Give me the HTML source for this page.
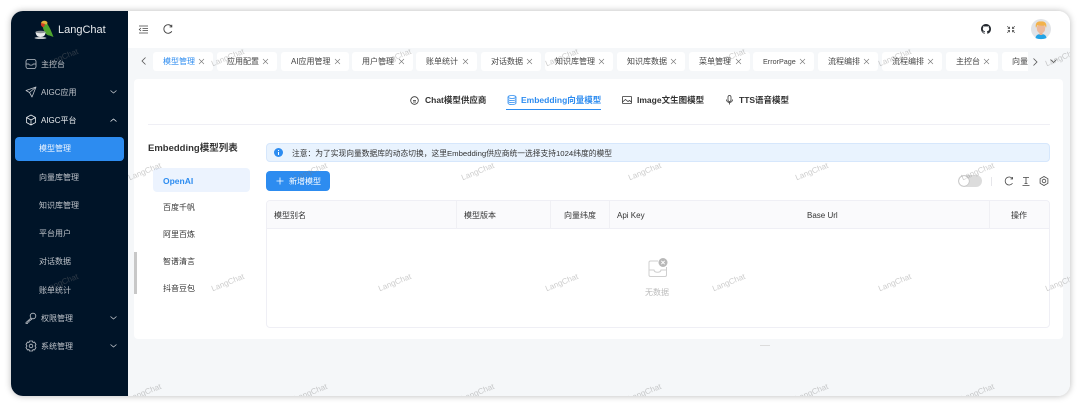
<!DOCTYPE html>
<html lang="zh"><head><meta charset="utf-8"><title>LangChat</title>
<style>
*{box-sizing:border-box;margin:0;padding:0}
html,body{width:1080px;height:407px;overflow:hidden;background:#fff;font-family:"Liberation Sans","Noto Sans CJK SC",sans-serif;font-size:8px;color:#444}
.a{position:absolute}
.t{position:absolute;white-space:nowrap;line-height:12px;height:12px}
#app{position:absolute;left:11px;top:11px;width:1059px;height:385px;border-radius:12px;box-shadow:0 0 7px rgba(0,0,0,.28);}
#clip{position:absolute;left:11px;top:11px;width:1059px;height:385px;border-radius:12px;overflow:hidden;background:#f5f7f9}
#stage{position:absolute;left:-11px;top:-11px;width:1080px;height:407px}
.side{color:#c0c5cb}
.tab{position:absolute;top:52px;height:19px;background:#fff;border-radius:3px;color:#444;line-height:20px;padding-left:10px;white-space:nowrap}
.tab svg{position:absolute;top:7px;right:9px}
.wm{position:absolute;width:60px;text-align:center;font-size:8px;line-height:10px;color:rgba(120,120,120,.38);transform:rotate(-22deg);white-space:nowrap}
.b{font-weight:700;color:#333}
.th{position:absolute;top:210px;line-height:12px;color:#333;white-space:nowrap}
.vl{position:absolute;top:201px;height:28px;width:1px;background:#f0f0f4}
svg{position:absolute;fill:none;overflow:visible}
</style></head><body>
<div id="app"></div>
<div id="clip"><div id="stage">

<!-- sidebar -->
<div class="a" style="left:11px;top:11px;width:117px;height:385px;background:#001428"></div>
<svg style="left:34px;top:19px" width="20" height="20" viewBox="0 0 20 20">
<path d="M8 5C9 3 13 3 14 6C16 9 18 14 19.500 18L15.500 16.500C12.500 16.500 9.500 13 8 5Z" fill="#4fa52e"/>
<path d="M7 4.500C7 1.500 12 .5 13.500 3.500L13 5.500L9 5Z" fill="#e3b13a"/>
<path d="M7 4C6.500 6.500 8 8.500 10 8L11 5Z" fill="#d13a25"/>
<path d="M1.500 13H11.500C11.500 16.500 9.500 18 6.500 18C3.500 18 2 16.500 1.500 13Z" fill="#e9ebec"/>
<ellipse cx="6.500" cy="19" rx="6" ry="1" fill="#c9cdd0"/>
<ellipse cx="6.500" cy="13" rx="5" ry="1.200" fill="#8d9499"/>
</svg>
<div class="t" style="left:58px;top:23px;height:14px;line-height:14px;font-size:11px;color:#e8ebee">LangChat</div>

<svg style="left:25px;top:58px" width="12" height="12" viewBox="0 0 12 12" stroke="#c0c5cb" stroke-width=".8"><rect x="1" y="1.500" width="10" height="9" rx="2"/><path d="M1 6H3.800C4 7.500 8 7.500 8.200 6H11"/></svg>
<div class="t side" style="left:41px;top:59px">主控台</div>
<svg style="left:25px;top:86px" width="12" height="12" viewBox="0 0 12 12" stroke="#c0c5cb" stroke-width=".8" stroke-linejoin="round"><path d="M11 1L1 4.500L4.500 6.500L7 11ZM4.500 6.500L11 1"/></svg>
<div class="t side" style="left:41px;top:87px">AIGC应用</div>
<svg style="left:110px;top:90px" width="7" height="4" viewBox="0 0 7 4" stroke="#c0c5cb" stroke-width=".8"><path d="M.5 .5L3.500 3L6.500 .5"/></svg>
<svg style="left:25px;top:114px" width="12" height="12" viewBox="0 0 12 12" stroke="#e8ebee" stroke-width=".8" stroke-linejoin="round"><path d="M6 1L10.500 3.500V8.500L6 11L1.500 8.500V3.500ZM1.500 3.500L6 6L10.500 3.500M6 6V11"/></svg>
<div class="t" style="left:41px;top:115px;color:#e8ebee">AIGC平台</div>
<svg style="left:110px;top:118px" width="7" height="4" viewBox="0 0 7 4" stroke="#e8ebee" stroke-width=".8"><path d="M.5 3.500L3.500 1L6.500 3.500"/></svg>

<div class="a" style="left:15px;top:137px;width:109px;height:24px;background:#2d8cf0;border-radius:4px"></div>
<div class="t" style="left:39px;top:143px;color:#f2f7fe">模型管理</div>
<div class="t side" style="left:39px;top:172px">向量库管理</div>
<div class="t side" style="left:39px;top:200px">知识库管理</div>
<div class="t side" style="left:39px;top:228px">平台用户</div>
<div class="t side" style="left:39px;top:256px">对话数据</div>
<div class="t side" style="left:39px;top:285px">账单统计</div>

<svg style="left:25px;top:312px" width="12" height="12" viewBox="0 0 12 12" stroke="#c0c5cb" stroke-width=".8"><circle cx="8" cy="4" r="2.800"/><path d="M6 6L1 10.500V11.500H2.500L3 10H4V9L5 8.500L7 7"/></svg>
<div class="t side" style="left:41px;top:313px">权限管理</div>
<svg style="left:110px;top:316px" width="7" height="4" viewBox="0 0 7 4" stroke="#c0c5cb" stroke-width=".8"><path d="M.5 .5L3.500 3L6.500 .5"/></svg>
<svg style="left:25px;top:340px" width="12" height="12" viewBox="0 0 12 12" stroke="#c0c5cb" stroke-width=".8" stroke-linejoin="round"><path d="M4.500 1H7.500L8 2.500L9.500 2L11 4.500L10 6L11 7.500L9.500 10L8 9.500L7.500 11H4.500L4 9.500L2.500 10L1 7.500L2 6L1 4.500L2.500 2L4 2.500Z"/><circle cx="6" cy="6" r="1.800"/></svg>
<div class="t side" style="left:41px;top:341px">系统管理</div>
<svg style="left:110px;top:344px" width="7" height="4" viewBox="0 0 7 4" stroke="#c0c5cb" stroke-width=".8"><path d="M.5 .5L3.500 3L6.500 .5"/></svg>

<!-- header -->
<div class="a" style="left:128px;top:11px;width:942px;height:37px;background:#fff"></div>
<svg style="left:139px;top:25px" width="9" height="9" viewBox="0 0 9 9" stroke="#444" stroke-width=".8"><path d="M0 1H9M3.500 3.500H9M3.500 5.500H9M0 8H9M2 3L.3 4.500L2 6"/></svg>
<svg style="left:163px;top:24px" width="10" height="10" viewBox="0 0 10 10" stroke="#444" stroke-width=".9"><path d="M8.800 2.700A4.300 4.300 0 1 0 8.800 7.300M8.800 .7V2.900H6.600"/></svg>
<svg style="left:981px;top:24px" width="10" height="10" viewBox="0 0 16 16"><path fill="#24292f" d="M8 0C3.580 0 0 3.580 0 8c0 3.540 2.290 6.530 5.470 7.590.4.070.55-.17.55-.38v-1.340c-2.230.48-2.700-1.070-2.700-1.070-.36-.93-.89-1.170-.89-1.170-.73-.5.050-.49.050-.49.800.06 1.230.83 1.230.83.710 1.220 1.870.870 2.330.660.070-.52.280-.87.510-1.070-1.780-.2-3.640-.89-3.640-3.950 0-.87.310-1.590.82-2.150-.08-.2-.36-1.020.08-2.120 0 0 .67-.21 2.200.82a7.660 7.660 0 0 1 4 0c1.530-1.040 2.200-.82 2.200-.82.44 1.100.16 1.920.08 2.120.51.560.82 1.270.82 2.150 0 3.070-1.870 3.750-3.650 3.950.29.250.54.730.54 1.480v2.200c0 .21.150.46.550.38A8.010 8.010 0 0 0 16 8c0-4.420-3.580-8-8-8z"/></svg>
<svg style="left:1007px;top:26px" width="8" height="7" viewBox="0 0 8 7" stroke="#444" stroke-width=".7"><path d="M.2 .2L2.400 2.300M.8 2.500H2.600V.8M7.800 .2L5.600 2.300M7.200 2.500H5.400V.8M.2 6.800L2.400 4.700M.8 4.500H2.600V6.200M7.800 6.800L5.600 4.700M7.200 4.500H5.400V6.200"/></svg>
<svg style="left:1031px;top:19px" width="20" height="20" viewBox="0 0 20 20">
<circle cx="10" cy="10" r="10" fill="#e1e3e7"/>
<path d="M4.500 19C5 16 7 15 10 15S15 16 15.500 19C12.500 20.500 7.500 20.500 4.500 19Z" fill="#23a3e6"/>
<rect x="8.500" y="12" width="3" height="4" fill="#e4b08f"/>
<ellipse cx="10" cy="9.500" rx="4.200" ry="5" fill="#ecb99c"/>
<path d="M5 9C3.500 3.500 7.500 1.800 10 2.500C13.500 1.800 16.500 4.500 15 9L14 6.500C11 7 8 6.500 6.500 6Z" fill="#f2b24c"/>
</svg>

<!-- tabs -->
<svg style="left:141px;top:57px" width="5" height="8" viewBox="0 0 5 8" stroke="#555" stroke-width=".8"><path d="M4.500 .5L1 4L4.500 7.500"/></svg>
<div class="tab" style="left:153px;width:60px;color:#2d8cf0">模型管理<svg width="5" height="5" viewBox="0 0 5 5" stroke="#777" stroke-width=".6"><path d="M0 0L5 5M5 0L0 5"/></svg></div>
<div class="tab" style="left:217px;width:60px">应用配置<svg width="5" height="5" viewBox="0 0 5 5" stroke="#777" stroke-width=".6"><path d="M0 0L5 5M5 0L0 5"/></svg></div>
<div class="tab" style="left:281px;width:68px">AI应用管理<svg width="5" height="5" viewBox="0 0 5 5" stroke="#777" stroke-width=".6"><path d="M0 0L5 5M5 0L0 5"/></svg></div>
<div class="tab" style="left:352px;width:61px">用户管理<svg width="5" height="5" viewBox="0 0 5 5" stroke="#777" stroke-width=".6"><path d="M0 0L5 5M5 0L0 5"/></svg></div>
<div class="tab" style="left:416px;width:61px">账单统计<svg width="5" height="5" viewBox="0 0 5 5" stroke="#777" stroke-width=".6"><path d="M0 0L5 5M5 0L0 5"/></svg></div>
<div class="tab" style="left:481px;width:60px">对话数据<svg width="5" height="5" viewBox="0 0 5 5" stroke="#777" stroke-width=".6"><path d="M0 0L5 5M5 0L0 5"/></svg></div>
<div class="tab" style="left:545px;width:68px">知识库管理<svg width="5" height="5" viewBox="0 0 5 5" stroke="#777" stroke-width=".6"><path d="M0 0L5 5M5 0L0 5"/></svg></div>
<div class="tab" style="left:617px;width:68px">知识库数据<svg width="5" height="5" viewBox="0 0 5 5" stroke="#777" stroke-width=".6"><path d="M0 0L5 5M5 0L0 5"/></svg></div>
<div class="tab" style="left:689px;width:61px">菜单管理<svg width="5" height="5" viewBox="0 0 5 5" stroke="#777" stroke-width=".6"><path d="M0 0L5 5M5 0L0 5"/></svg></div>
<div class="tab" style="left:753px;width:61px;font-size:7.200px">ErrorPage<svg width="5" height="5" viewBox="0 0 5 5" stroke="#777" stroke-width=".6"><path d="M0 0L5 5M5 0L0 5"/></svg></div>
<div class="tab" style="left:818px;width:60px">流程编排<svg width="5" height="5" viewBox="0 0 5 5" stroke="#777" stroke-width=".6"><path d="M0 0L5 5M5 0L0 5"/></svg></div>
<div class="tab" style="left:882px;width:60px">流程编排<svg width="5" height="5" viewBox="0 0 5 5" stroke="#777" stroke-width=".6"><path d="M0 0L5 5M5 0L0 5"/></svg></div>
<div class="tab" style="left:946px;width:52px">主控台<svg width="5" height="5" viewBox="0 0 5 5" stroke="#777" stroke-width=".6"><path d="M0 0L5 5M5 0L0 5"/></svg></div>
<div class="tab" style="left:1002px;width:26px;overflow:hidden;border-radius:3px 0 0 3px">向量</div>
<svg style="left:1033px;top:58px" width="5" height="8" viewBox="0 0 5 8" stroke="#555" stroke-width=".8"><path d="M.5 .5L4 4L.5 7.500"/></svg>
<svg style="left:1050px;top:59px" width="7" height="4" viewBox="0 0 7 4" stroke="#555" stroke-width=".8"><path d="M.5 .5L3.500 3.500L6.500 .5"/></svg>

<!-- card -->
<div class="a" style="left:134px;top:79px;width:929px;height:260px;background:#fff;border-radius:4px"></div>
<svg style="left:410px;top:96px" width="9" height="9" viewBox="0 0 9 9" stroke="#333" stroke-width=".8"><circle cx="4.500" cy="4.500" r="3.800"/><path d="M3 4.500H6M3 6H6"/></svg>
<div class="t b" style="left:425px;top:94px;font-size:8.500px">Chat模型供应商</div>
<svg style="left:507px;top:95px" width="10" height="10" viewBox="0 0 10 10" stroke="#2d8cf0" stroke-width=".8"><ellipse cx="5" cy="2" rx="4" ry="1.500"/><path d="M1 2V8C1 10 9 10 9 8V2M1 4C1 6 9 6 9 4M1 6C1 8 9 8 9 6"/></svg>
<div class="t" style="left:521px;top:94px;font-size:8.500px;font-weight:700;color:#2d8cf0">Embedding向量模型</div>
<div class="a" style="left:506px;top:108.500px;width:95px;height:1px;background:#2d8cf0"></div>
<svg style="left:622px;top:96px" width="10" height="8" viewBox="0 0 10 8" stroke="#333" stroke-width=".8"><rect x=".5" y=".5" width="9" height="7" rx=".5"/><path d="M.5 6L3.500 3.500L6 5.500L7.500 4.500L9.500 6"/></svg>
<div class="t b" style="left:637px;top:94px;font-size:8.500px">Image文生图模型</div>
<svg style="left:726px;top:95px" width="7" height="10" viewBox="0 0 7 10" stroke="#333" stroke-width=".8"><rect x="2" y=".5" width="3" height="6" rx="1.500"/><path d="M.5 4.500C.5 8.500 6.500 8.500 6.500 4.500M3.500 7.500V9.500"/></svg>
<div class="t b" style="left:739px;top:94px;font-size:8.500px">TTS语音模型</div>
<div class="a" style="left:148px;top:124px;width:902px;height:1px;background:#efeff5"></div>

<!-- left list -->
<div class="t b" style="left:148px;top:142.500px;font-size:9.500px">Embedding模型列表</div>
<div class="a" style="left:153px;top:168px;width:97px;height:24px;background:#ecf3fe;border-radius:4px"></div>
<div class="t" style="left:163px;top:174.500px;font-weight:700;font-size:8.500px;color:#2d8cf0">OpenAI</div>
<div class="t" style="left:163px;top:202px;color:#333">百度千帆</div>
<div class="t" style="left:163px;top:229px;color:#333">阿里百炼</div>
<div class="t" style="left:163px;top:256px;color:#333">智谱清言</div>
<div class="t" style="left:163px;top:283px;color:#333">抖音豆包</div>
<div class="a" style="left:134px;top:252px;width:3px;height:42px;background:#c8c8c8"></div>

<!-- alert -->
<div class="a" style="left:266px;top:143px;width:784px;height:19px;background:#e9f3fe;border:1px solid #d6e7fc;border-radius:4px"></div>
<svg style="left:274px;top:148px" width="9" height="9" viewBox="0 0 9 9"><circle cx="4.500" cy="4.500" r="4.500" fill="#2d8cf0"/><path d="M4.500 4V7M4.500 2V3" stroke="#fff" stroke-width="1"/></svg>
<div class="t" style="left:292px;top:148px;color:#333;font-size:7.750px">注意：为了实现向量数据库的动态切换，这里Embedding供应商统一选择支持1024纬度的模型</div>

<!-- toolbar -->
<div class="a" style="left:266px;top:171px;width:64px;height:20px;background:#2d8cf0;border-radius:4px"></div>
<svg style="left:276px;top:177px" width="8" height="8" viewBox="0 0 8 8" stroke="#fff" stroke-width=".8"><path d="M4 .5V7.500M.5 4H7.500"/></svg>
<div class="t" style="left:289px;top:176px;color:#fff">新增模型</div>
<div class="a" style="left:958px;top:175px;width:24px;height:12px;border-radius:6px;background:#dcdcdc"></div>
<div class="a" style="left:959px;top:176px;width:10px;height:10px;border-radius:5px;background:#fff;box-shadow:0 0 1px rgba(0,0,0,.5)"></div>
<div class="a" style="left:991px;top:177px;width:1px;height:9px;background:#e6e6ea"></div>
<svg style="left:1004px;top:176px" width="10" height="10" viewBox="0 0 10 10" stroke="#444" stroke-width=".8"><path d="M8.500 2.800A4 4 0 1 0 8.500 7.200M8.500 1V3H6.500"/></svg>
<svg style="left:1022px;top:177px" width="8" height="9" viewBox="0 0 8 9" stroke="#444" stroke-width=".8"><path d="M1 .5H7M4 .5V6.500M2.500 6.500H5.500M.5 8.500H7.500"/></svg>
<svg style="left:1039px;top:176px" width="10" height="10" viewBox="0 0 10 10" stroke="#444" stroke-width=".8" stroke-linejoin="round"><path d="M5 .5L8.900 2.700V7.300L5 9.500L1.100 7.300V2.700Z"/><circle cx="5" cy="5" r="1.800"/></svg>

<!-- table -->
<div class="a" style="left:266px;top:200px;width:784px;height:128px;border:1px solid #efeff5;border-radius:4px"></div>
<div class="a" style="left:267px;top:201px;width:782px;height:28px;background:#fafafc;border-bottom:1px solid #efeff5;border-radius:3px 3px 0 0"></div>
<div class="vl" style="left:456px"></div><div class="vl" style="left:550px"></div><div class="vl" style="left:609px"></div><div class="vl" style="left:989px"></div>
<div class="th" style="left:274px">模型别名</div>
<div class="th" style="left:464px">模型版本</div>
<div class="th" style="left:564px">向量纬度</div>
<div class="th" style="left:617px">Api Key</div>
<div class="th" style="left:807px">Base Url</div>
<div class="th" style="left:1011px">操作</div>
<svg style="left:648px;top:258px" width="20" height="20" viewBox="0 0 20 20" stroke="#cfcfcf" stroke-width="1"><path d="M10 3H2.500C1.500 3 1 3.500 1 4.500V17C1 18 1.500 18.500 2.500 18.500H17C18 18.500 18.500 18 18.500 17V9"/><path d="M1 12H6C6.500 15 12.500 15 13 12H18.500"/><circle cx="15" cy="4.500" r="4.500" fill="#b8b8b8" stroke="none"/><path d="M13.300 2.800L16.700 6.200M16.700 2.800L13.300 6.200" stroke="#fff"/></svg>
<div class="t" style="left:645px;top:287px;color:#bbb">无数据</div>
<div class="a" style="left:760px;top:345px;width:10px;height:1px;background:#dcdcdc"></div>

<!-- watermark -->
<div class="wm" style="left:32px;top:53px">LangChat</div><div class="wm" style="left:198px;top:53px">LangChat</div><div class="wm" style="left:365px;top:53px">LangChat</div><div class="wm" style="left:532px;top:53px">LangChat</div><div class="wm" style="left:699px;top:53px">LangChat</div><div class="wm" style="left:865px;top:53px">LangChat</div><div class="wm" style="left:1032px;top:53px">LangChat</div>
<div class="wm" style="left:115px;top:167px">LangChat</div><div class="wm" style="left:281px;top:167px">LangChat</div><div class="wm" style="left:448px;top:167px">LangChat</div><div class="wm" style="left:615px;top:167px">LangChat</div><div class="wm" style="left:782px;top:167px">LangChat</div><div class="wm" style="left:948px;top:167px">LangChat</div>
<div class="wm" style="left:32px;top:278px">LangChat</div><div class="wm" style="left:198px;top:278px">LangChat</div><div class="wm" style="left:365px;top:278px">LangChat</div><div class="wm" style="left:532px;top:278px">LangChat</div><div class="wm" style="left:699px;top:278px">LangChat</div><div class="wm" style="left:865px;top:278px">LangChat</div><div class="wm" style="left:1032px;top:278px">LangChat</div>
<div class="wm" style="left:115px;top:388px">LangChat</div><div class="wm" style="left:281px;top:388px">LangChat</div><div class="wm" style="left:448px;top:388px">LangChat</div><div class="wm" style="left:615px;top:388px">LangChat</div><div class="wm" style="left:782px;top:388px">LangChat</div><div class="wm" style="left:948px;top:388px">LangChat</div>
</div></div>
</body></html>
